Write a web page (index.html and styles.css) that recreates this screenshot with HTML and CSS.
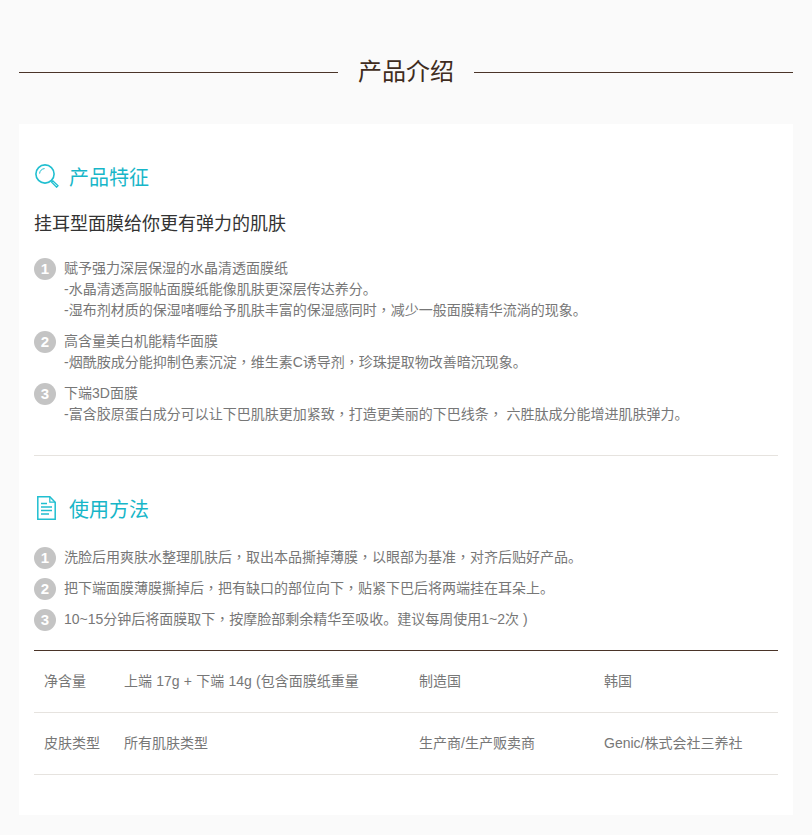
FILE: index.html
```html
<!DOCTYPE html>
<html lang="zh-CN">
<head>
<meta charset="utf-8">
<title>产品介绍</title>
<link rel="stylesheet" href="styles.css">
</head>
<body>
<div class="page">
  <div class="title-row">
    <span class="rule"></span>
    <h1 class="title">产品介绍</h1>
    <span class="rule"></span>
  </div>
  <main class="card">
    <section class="feature">
      <h2 class="heading">
        <svg class="icon-search" viewBox="0 0 24 24" width="24" height="24" fill="none" stroke="#20bfd0">
          <circle cx="10" cy="10" r="9.1" stroke-width="1.6"/>
          <path d="M4.6 9.6A5.2 5.2 0 0 1 9.6 4.6" stroke-width="1"/>
          <path d="M16.4 16.4l1.6 1.6" stroke-width="1.4"/>
          <path d="M18 17l5 4.8-1.4 1.4-4.9-5z" stroke-width="1.3"/>
        </svg>
        <span>产品特征</span>
      </h2>
      <h3 class="subtitle">挂耳型面膜给你更有弹力的肌肤</h3>
      <ol class="list">
        <li class="item"><span class="badge">1</span><p class="text">赋予强力深层保湿的水晶清透面膜纸<br>-水晶清透高服帖面膜纸能像肌肤更深层传达养分。<br>-湿布剂材质的保湿啫喱给予肌肤丰富的保湿感同时<span class="comma" lang="zh-Hant">，</span>减少一般面膜精华流淌的现象。</p></li>
        <li class="item"><span class="badge">2</span><p class="text">高含量美白机能精华面膜<br>-烟酰胺成分能抑制色素沉淀<span class="comma" lang="zh-Hant">，</span>维生素C诱导剂<span class="comma" lang="zh-Hant">，</span>珍珠提取物改善暗沉现象。</p></li>
        <li class="item"><span class="badge">3</span><p class="text">下端3D面膜<br>-富含胶原蛋白成分可以让下巴肌肤更加紧致<span class="comma" lang="zh-Hant">，</span>打造更美丽的下巴线条<span class="comma" lang="zh-Hant">，</span> 六胜肽成分能增进肌肤弹力。</p></li>
      </ol>
    </section>
    <section class="usage">
      <h2 class="heading">
        <svg class="icon-doc" viewBox="0 0 19 24" width="19" height="24" fill="none" stroke="#20bfd0" stroke-width="1.5">
          <path d="M.8.8h12l5.4 5.4v17H.8z"/>
          <path d="M12.8.8v5.4h5.4" stroke-width="1.2"/>
          <path d="M4 7.5h6M4 11h11M4 14.5h11M4 18h8" stroke-width="1.5"/>
        </svg>
        <span>使用方法</span>
      </h2>
      <ol class="list list-usage">
        <li class="item"><span class="badge">1</span><p class="text">洗脸后用爽肤水整理肌肤后<span class="comma" lang="zh-Hant">，</span>取出本品撕掉薄膜<span class="comma" lang="zh-Hant">，</span>以眼部为基准<span class="comma" lang="zh-Hant">，</span>对齐后贴好产品。</p></li>
        <li class="item"><span class="badge">2</span><p class="text">把下端面膜薄膜撕掉后<span class="comma" lang="zh-Hant">，</span>把有缺口的部位向下<span class="comma" lang="zh-Hant">，</span>贴紧下巴后将两端挂在耳朵上。</p></li>
        <li class="item"><span class="badge">3</span><p class="text">10~15分钟后将面膜取下<span class="comma" lang="zh-Hant">，</span>按摩脸部剩余精华至吸收。建议每周使用1~2次 )</p></li>
      </ol>
      <table class="specs">
        <colgroup><col class="c1"><col class="c2"><col class="c3"><col class="c4"></colgroup>
        <tr><td>净含量</td><td class="spaced">上端 17g + 下端 14g (包含面膜纸重量</td><td>制造国</td><td>韩国</td></tr>
        <tr><td>皮肤类型</td><td>所有肌肤类型</td><td>生产商/生产贩卖商</td><td>Genic/株式会社三养社</td></tr>
      </table>
    </section>
  </main>
</div>
</body>
</html>
```
FILE: styles.css
```css
* { box-sizing: border-box; }
html, body { margin: 0; padding: 0; }
body {
  background: #fff;
  font-family: "Liberation Sans", "Noto Sans CJK SC", sans-serif;
  color: #777;
}
.page {
  background: #fafafa;
  height: 835px;
  padding: 52px 19px 0;
  overflow: hidden;
}
.title-row {
  display: flex;
  align-items: center;
  gap: 20px;
  height: 40px;
}
.rule { flex: 1; height: 1px; background: #4a3428; }
.title {
  margin: 0;
  font-size: 24px;
  font-weight: 400;
  line-height: 40px;
  color: #3f2c20;
}
.card {
  margin-top: 32px;
  background: #fff;
  height: 691px;
  padding: 35px 15px 0;
}
.feature { height: 297px; border-bottom: 1px solid #e6e3df; }
.heading {
  display: flex;
  align-items: center;
  margin: 0;
  height: 34px;
  font-size: 20px;
  font-weight: 400;
  color: #17b6c8;
}
.icon-search { flex: none; margin: 0 10px 0 1px; }
.icon-doc { flex: none; margin: 0 13px 0 3px; }
.subtitle {
  margin: 16px 0 0;
  font-size: 18px;
  font-weight: 400;
  line-height: 30px;
  color: #333;
}
.list { list-style: none; margin: 19px 0 0; padding: 0; }
.item { display: flex; align-items: flex-start; margin-bottom: 10px; }
.badge {
  flex: none;
  width: 22px;
  height: 22px;
  margin: 0 8px 0 0;
  border-radius: 50%;
  background: #c4c4c4;
  color: #fff;
  font-size: 15px;
  font-weight: 700;
  line-height: 22px;
  text-align: center;
}
.text { margin: 0; font-size: 14px; line-height: 21px; color: #777; }
.comma { font-family: "Noto Sans CJK TC", sans-serif; line-height: 1; }
.usage { padding-top: 35px; }
.list-usage { margin-top: 22px; }
.list-usage .item { margin-bottom: 9px; }
.specs {
  width: 744px;
  margin-top: 19px;
  border-collapse: collapse;
  table-layout: fixed;
  border-top: 1px solid #4a3428;
  font-size: 14px;
  color: #777;
}
.specs td { height: 62px; padding: 0 10px 4px; border-bottom: 1px solid #e6e3df; }
.spaced { word-spacing: 0.35px; }
.c1 { width: 80px; }
.c2 { width: 295px; }
.c3 { width: 185px; }
.c4 { width: 184px; }
```
